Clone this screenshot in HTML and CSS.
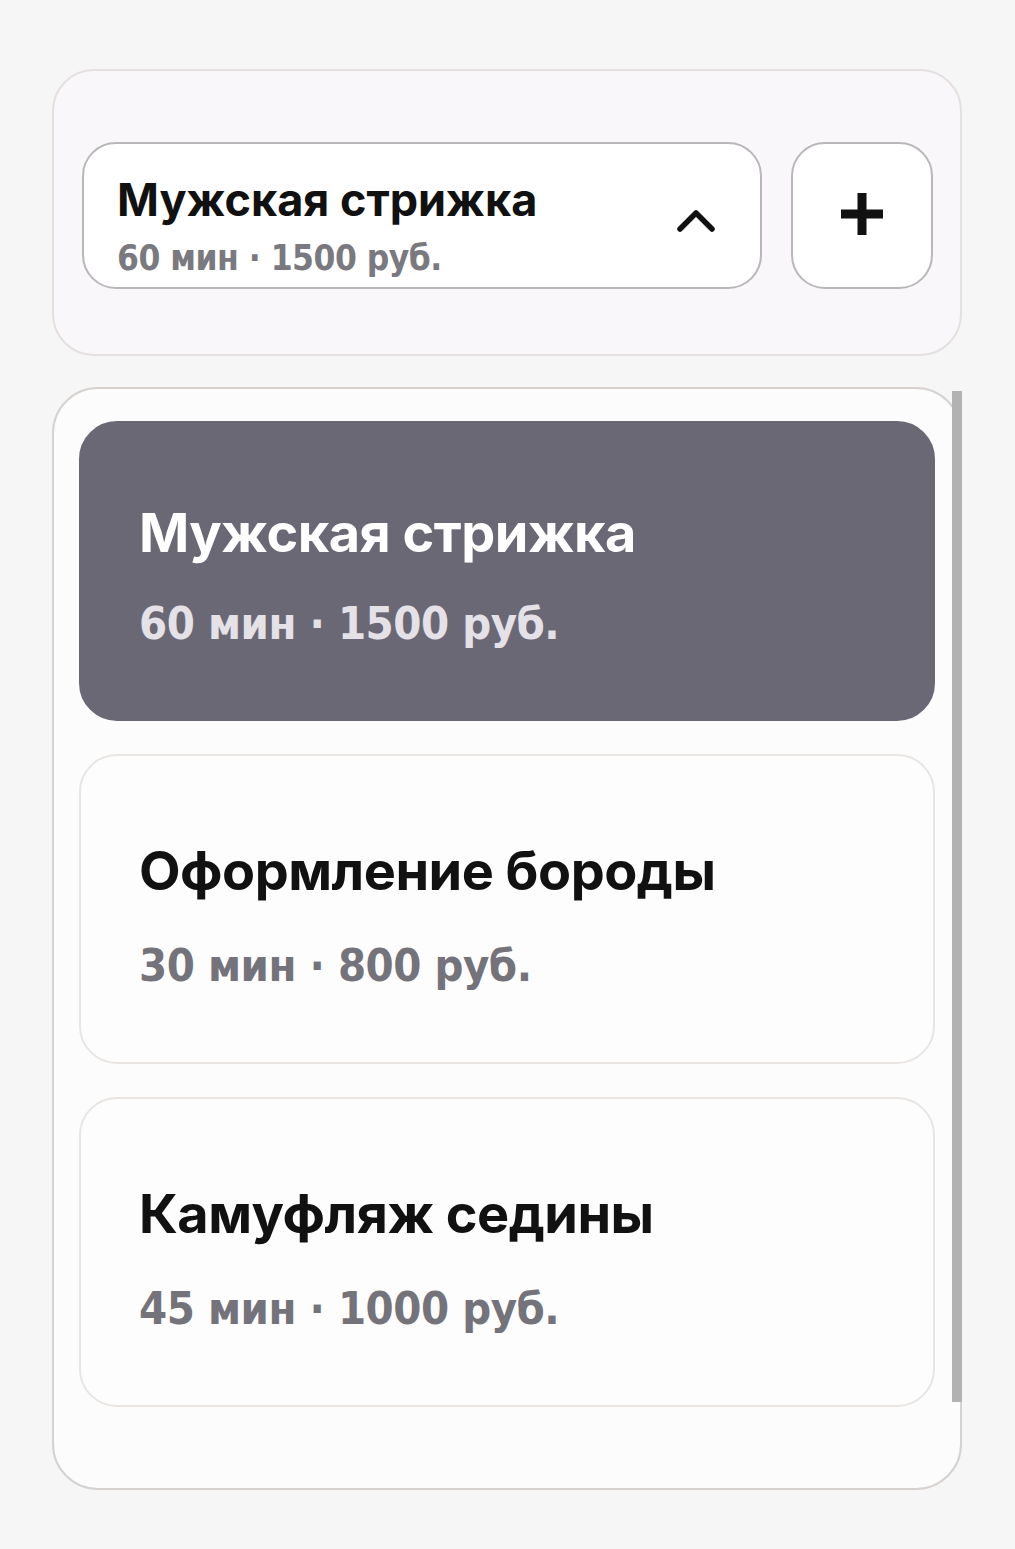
FILE: index.html
```html
<!DOCTYPE html>
<html lang="ru">
<head>
<meta charset="utf-8">
<title>Услуги</title>
<link rel="stylesheet" href="styles.css">
</head>
<body>
<div class="page">
  <section class="picker">
    <div class="select">
      <div class="select-text">
        <div class="select-title">Мужская стрижка</div>
        <div class="select-sub">60 мин · 1500 руб.</div>
      </div>
      <svg class="chevron" width="38" height="24" viewBox="0 0 38 24"><path d="M3 21 L19 5 L35 21" fill="none" stroke="#111" stroke-width="5.5" stroke-linecap="round" stroke-linejoin="round"/></svg>
    </div>
    <button class="add" type="button" aria-label="Добавить">
      <svg width="44" height="44" viewBox="0 0 44 44"><path d="M22 1 V43 M1 22 H43" fill="none" stroke="#111" stroke-width="9"/></svg>
    </button>
  </section>
  <section class="list">
    <div class="card selected">
      <div class="card-title">Мужская стрижка</div>
      <div class="card-sub">60 мин · 1500 руб.</div>
    </div>
    <div class="card">
      <div class="card-title">Оформление бороды</div>
      <div class="card-sub">30 мин · 800 руб.</div>
    </div>
    <div class="card">
      <div class="card-title">Камуфляж седины</div>
      <div class="card-sub">45 мин · 1000 руб.</div>
    </div>
    <div class="scrollbar"></div>
  </section>
</div>
</body>
</html>
```
FILE: styles.css
```css
html, body {
  margin: 0;
  padding: 0;
  background: #f7f6f6;
}
body {
  font-family: Inter, "Noto Sans", sans-serif;
}
.page {
  padding: 69px 53px 0 52px;
  display: flex;
  flex-direction: column;
  gap: 31px;
}
.picker {
  box-sizing: border-box;
  height: 287px;
  background: #f9f7f9;
  border: 2px solid #e4e0e0;
  border-radius: 42px;
  padding: 71px 27px 0 28px;
  display: flex;
  gap: 29px;
}
.select {
  box-sizing: border-box;
  width: 680px;
  height: 147px;
  background: #fff;
  border: 2px solid #bab7ba;
  border-radius: 34px;
  display: flex;
  align-items: flex-start;
  justify-content: space-between;
  padding: 31px 45px 0 33px;
}
.select-text {
  display: flex;
  flex-direction: column;
  gap: 14px;
}
.select-title {
  font-size: 45px;
  font-weight: 700;
  color: #111;
  line-height: 1.1;
  letter-spacing: 0;
}
.select-sub {
  font-family: "DejaVu Sans", sans-serif;
  font-stretch: condensed;
  font-size: 35px;
  font-weight: 700;
  color: #7a7980;
  line-height: 1.1;
  letter-spacing: -0.5px;
}
.chevron {
  align-self: center;
  margin-top: -22px;
}
.add {
  box-sizing: border-box;
  width: 142px;
  height: 147px;
  background: #fff;
  border: 2px solid #bab7ba;
  border-radius: 34px;
  display: flex;
  align-items: center;
  justify-content: center;
  padding: 0 0 4px 0;
}
.list {
  position: relative;
  box-sizing: border-box;
  height: 1103px;
  background: #fcfcfc;
  border: 2px solid #d6d2d0;
  border-radius: 46px;
  padding: 32px 25px 0 25px;
  display: flex;
  flex-direction: column;
  gap: 33px;
}
.card {
  box-sizing: border-box;
  height: 310px;
  background: #fdfdfd;
  border: 2px solid #e9e5e3;
  border-radius: 38px;
  padding: 85px 0 0 58px;
  display: flex;
  flex-direction: column;
  gap: 41px;
}
.card.selected {
  height: 300px;
  background: #6b6876;
  border-color: #6b6876;
  padding-top: 80px;
  gap: 37px;
}
.card-title {
  font-size: 54px;
  font-weight: 700;
  color: #111;
  line-height: 1.1;
  letter-spacing: -0.5px;
}
.card-sub {
  font-family: "DejaVu Sans", sans-serif;
  font-stretch: condensed;
  font-size: 45px;
  font-weight: 700;
  color: #74737b;
  line-height: 1.1;
  letter-spacing: -0.5px;
}
.selected .card-title {
  color: #fff;
}
.selected .card-sub {
  color: #e4e2e6;
}
.scrollbar {
  position: absolute;
  right: -2px;
  top: 2px;
  width: 10px;
  height: 1011px;
  background: #b2b2b2;
}
```
